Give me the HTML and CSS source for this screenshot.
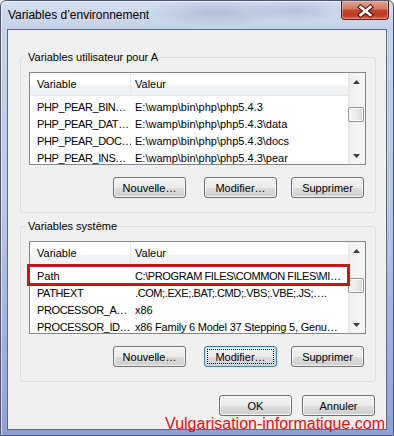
FILE: index.html
```html
<!DOCTYPE html>
<html lang="fr">

<head>
    <meta charset="UTF-8">
    <meta name="viewport" content="width=device-width, initial-scale=1.0">
    <title>Variables d'environnement</title>
    <link rel="stylesheet" href="styles.css">
</head>

<body>
    <div class="window">
        <div class="titlebar">
            <span class="title">Variables d’environnement</span>
            <button class="close-btn" aria-label="Fermer">
                <svg width="47" height="19" viewBox="0 0 47 19">
                    <path d="M19 6 L29 14 M29 6 L19 14" stroke="#4a1c14" stroke-width="5" stroke-linecap="square" fill="none" />
                    <path d="M19 6 L29 14 M29 6 L19 14" stroke="#fff" stroke-width="2.6" stroke-linecap="square" fill="none" />
                </svg>
            </button>
        </div>

        <div class="client">
            <fieldset class="group">
                <legend>Variables utilisateur pour A</legend>
                <div class="list">
                    <div class="list-body">
                        <div class="list-head">
                            <div class="cell col-name">Variable</div>
                            <div class="cell col-value">Valeur</div>
                        </div>
                        <div class="list-rows">
                            <div class="row">
                                <div class="cell col-name caps">PHP_PEAR_BIN…</div>
                                <div class="cell col-value">E:\wamp\bin\php\php5.4.3</div>
                            </div>
                            <div class="row">
                                <div class="cell col-name caps">PHP_PEAR_DAT…</div>
                                <div class="cell col-value">E:\wamp\bin\php\php5.4.3\data</div>
                            </div>
                            <div class="row">
                                <div class="cell col-name caps">PHP_PEAR_DOC…</div>
                                <div class="cell col-value">E:\wamp\bin\php\php5.4.3\docs</div>
                            </div>
                            <div class="row">
                                <div class="cell col-name caps">PHP_PEAR_INS…</div>
                                <div class="cell col-value">E:\wamp\bin\php\php5.4.3\pear</div>
                            </div>
                        </div>
                    </div>
                    <div class="scrollbar">
                        <div class="scroll-btn">
                            <svg width="7" height="4" viewBox="0 0 7 4"><polygon points="3.5,0 7,4 0,4" fill="#3d3d3d" /></svg>
                        </div>
                        <div class="scroll-track">
                            <div class="scroll-thumb thumb-user"></div>
                        </div>
                        <div class="scroll-btn">
                            <svg width="7" height="4" viewBox="0 0 7 4"><polygon points="0,0 7,0 3.5,4" fill="#3d3d3d" /></svg>
                        </div>
                    </div>
                </div>
                <div class="actions">
                    <button class="btn">Nouvelle…</button>
                    <button class="btn btn-mid">Modifier…</button>
                    <button class="btn">Supprimer</button>
                </div>
            </fieldset>

            <fieldset class="group group-system">
                <legend>Variables système</legend>
                <div class="list">
                    <div class="list-body">
                        <div class="list-head">
                            <div class="cell col-name">Variable</div>
                            <div class="cell col-value">Valeur</div>
                        </div>
                        <div class="list-rows">
                            <div class="row">
                                <div class="cell col-name">Path</div>
                                <div class="cell col-value caps">C:\PROGRAM FILES\COMMON FILES\MI…</div>
                            </div>
                            <div class="row">
                                <div class="cell col-name caps">PATHEXT</div>
                                <div class="cell col-value caps">.COM;.EXE;.BAT;.CMD;.VBS;.VBE;.JS;….</div>
                            </div>
                            <div class="row">
                                <div class="cell col-name caps">PROCESSOR_A…</div>
                                <div class="cell col-value">x86</div>
                            </div>
                            <div class="row">
                                <div class="cell col-name caps">PROCESSOR_ID…</div>
                                <div class="cell col-value tight">x86 Family 6 Model 37 Stepping 5, Genu…</div>
                            </div>
                        </div>
                    </div>
                    <div class="scrollbar">
                        <div class="scroll-btn">
                            <svg width="7" height="4" viewBox="0 0 7 4"><polygon points="3.5,0 7,4 0,4" fill="#3d3d3d" /></svg>
                        </div>
                        <div class="scroll-track">
                            <div class="scroll-thumb thumb-system"></div>
                        </div>
                        <div class="scroll-btn">
                            <svg width="7" height="4" viewBox="0 0 7 4"><polygon points="0,0 7,0 3.5,4" fill="#3d3d3d" /></svg>
                        </div>
                    </div>
                    <div class="highlight"></div>
                </div>
                <div class="actions">
                    <button class="btn">Nouvelle…</button>
                    <button class="btn btn-mid btn-focus">Modifier…</button>
                    <button class="btn">Supprimer</button>
                </div>
            </fieldset>

            <div class="footer">
                <button class="btn">OK</button>
                <button class="btn">Annuler</button>
            </div>
        </div>

        <div class="watermark">Vulgarisation-informatique.com</div>
    </div>
</body>

</html>
```

FILE: styles.css
```css
body {
    margin: 0;
    background-color: #fff;
    font-family: "Liberation Sans", Arial, sans-serif;
}

.window {
    position: relative;
    width: 394px;
    height: 436px;
    box-sizing: border-box;
    border: 1px solid #4a5674;
    border-radius: 6px 6px 0 0;
    background:
        radial-gradient(ellipse 70px 14px at 215px 11px, rgba(120, 138, 178, 0.35), transparent),
        radial-gradient(ellipse 50px 12px at 295px 9px, rgba(120, 138, 178, 0.3), transparent),
        linear-gradient(180deg, #d3def0 0, #c4d3ea 28px, #b8c9e6 200px, #8e9fd6 436px);
    box-shadow: inset 1px 1px 0 rgba(255, 255, 255, 0.6);
}

/* title bar */

.titlebar {
    display: flex;
    align-items: flex-start;
    height: 28px;
}

.title {
    margin: 7px 0 0 7px;
    font-size: 12px;
    line-height: 15px;
    color: #000;
}

.close-btn {
    margin-left: auto;
    margin-right: 4px;
    width: 48px;
    height: 19px;
    padding: 0;
    border: 1px solid #5a2016;
    border-top: none;
    border-radius: 0 0 4px 4px;
    background: linear-gradient(180deg, #e2a295 0, #d27a69 42%, #c4452e 52%, #bd3a24 78%, #d8634a 100%);
    box-shadow: inset 0 0 0 1px rgba(255, 200, 190, 0.45);
    display: flex;
    align-items: center;
    justify-content: center;
}

.close-btn svg {
    display: block;
}

/* client area */

.client {
    margin-left: 6px;
    width: 380px;
    height: 401px;
    box-sizing: border-box;
    border: 1px solid #5d6a86;
    background-color: #f0f0f0;
    padding: 21px 10px 0 12px;
    font-size: 11px;
    color: #000;
}

.group {
    margin: 0;
    padding: 8px 9px 14px 8px;
    border: 1px solid #d5dfe5;
    border-radius: 3px;
    min-inline-size: 0;
}

.group legend {
    margin-left: -4px;
    padding: 0 3px;
    line-height: 13px;
}

.group-system {
    margin-top: 7px;
}

/* list views */

.list {
    position: relative;
    display: flex;
    height: 93px;
    box-sizing: border-box;
    border: 1px solid #828790;
    background-color: #fff;
}

.list-body {
    flex: 1;
    overflow: hidden;
}

.list-head {
    display: flex;
    height: 22px;
    border-bottom: 1px solid #e4e7ec;
    background: linear-gradient(180deg, #fff 0, #fff 55%, #f1f2f4 60%, #f1f2f4 100%);
}

.list-head .col-name {
    border-right: 1px solid #e3e8ee;
}

.list-head .cell {
    line-height: 22px;
}

.list-rows {
    padding-top: 3px;
}

.row {
    display: flex;
    height: 17px;
}

.cell {
    line-height: 17px;
    white-space: nowrap;
    overflow: hidden;
}

.col-name {
    width: 101px;
    box-sizing: border-box;
    padding-left: 7px;
    flex-shrink: 0;
}

.col-value {
    flex: 1;
    padding-left: 4px;
}

.caps {
    letter-spacing: -0.4px;
}

.tight {
    letter-spacing: -0.2px;
}

.scrollbar {
    width: 17px;
    display: flex;
    flex-direction: column;
    background: linear-gradient(90deg, #e6e6e6 0, #f2f2f2 20%, #f7f7f7 100%);
}

.scroll-btn {
    height: 17px;
    display: flex;
    align-items: center;
    justify-content: center;
}

.scroll-track {
    flex: 1;
}

.scroll-thumb {
    margin: 0 1px 0 0;
    height: 15px;
    box-sizing: border-box;
    border: 1px solid #959595;
    border-radius: 2px;
    background: linear-gradient(90deg, #f4f4f4 0, #ebebeb 50%, #dadada 100%);
    box-shadow: inset 0 0 0 1px #fbfbfb;
}

.thumb-user {
    margin-top: 17px;
}

.thumb-system {
    margin-top: 19px;
}

.highlight {
    position: absolute;
    left: -3px;
    top: 22px;
    width: 323px;
    height: 22px;
    box-sizing: border-box;
    border: 3px solid #be1a1e;
}

/* buttons */

.actions {
    display: flex;
    justify-content: flex-end;
    margin-top: 12px;
    padding-right: 2px;
}

.btn {
    width: 73px;
    height: 21px;
    box-sizing: border-box;
    padding: 0;
    border: 1px solid #707070;
    border-radius: 3px;
    background: linear-gradient(180deg, #f2f2f2 0, #ebebeb 50%, #dddddd 50%, #cfcfcf 100%);
    box-shadow: inset 0 0 0 1px rgba(255, 255, 255, 0.7);
    font-family: "Liberation Sans", Arial, sans-serif;
    font-size: 11px;
    color: #000;
}

.btn-mid {
    margin-left: 18px;
    margin-right: 14px;
}

.btn-focus {
    border-color: #3c7fb1;
    box-shadow: inset 0 0 0 1px #b4e2f8;
    outline: 1px dotted #000;
    outline-offset: -4px;
}

.footer {
    display: flex;
    justify-content: flex-end;
    gap: 10px;
    margin-top: 13px;
    padding-right: 1px;
}

/* overlay watermark of the screenshot */

.watermark {
    position: absolute;
    right: 8px;
    top: 415px;
    font-size: 16px;
    line-height: 16px;
    color: #e01010;
}
```
